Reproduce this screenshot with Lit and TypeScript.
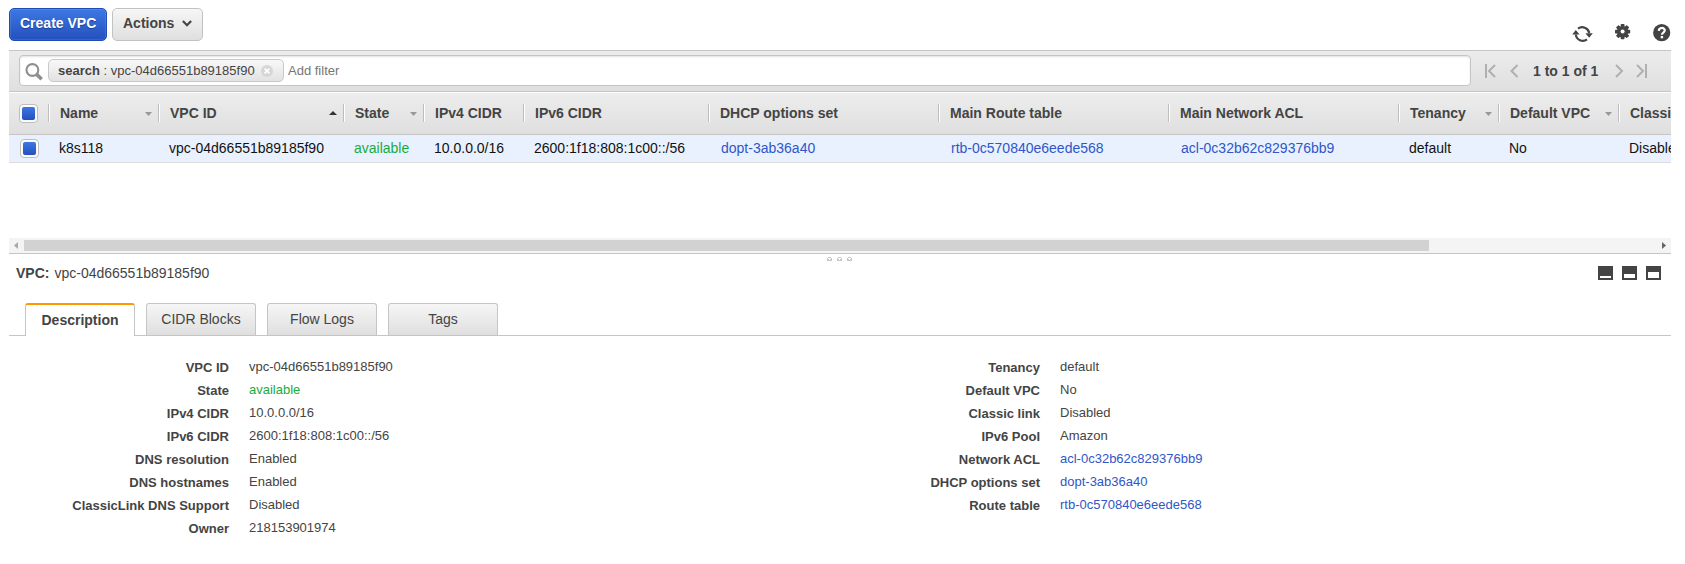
import { LitElement, html, css, svg } from "lit";
import { customElement, property } from "lit/decorators.js";
import { classMap } from "lit/directives/class-map.js";

type Col = { label: string; value: string; w: number; sort?: "asc" | "none"; kind?: "link" | "ok" };
type Field = { label: string; value: string; kind?: "link" | "ok" };

const COLUMNS: Col[] = [
  { label: "Name", value: "k8s118", w: 110, sort: "none" },
  { label: "VPC ID", value: "vpc-04d66551b89185f90", w: 185, sort: "asc" },
  { label: "State", value: "available", w: 80, sort: "none", kind: "ok" },
  { label: "IPv4 CIDR", value: "10.0.0.0/16", w: 100 },
  { label: "IPv6 CIDR", value: "2600:1f18:808:1c00::/56", w: 185 },
  { label: "DHCP options set", value: "dopt-3ab36a40", w: 230, kind: "link" },
  { label: "Main Route table", value: "rtb-0c570840e6eede568", w: 230, kind: "link" },
  { label: "Main Network ACL", value: "acl-0c32b62c829376bb9", w: 230, kind: "link" },
  { label: "Tenancy", value: "default", w: 100, sort: "none" },
  { label: "Default VPC", value: "No", w: 120, sort: "none" },
  { label: "Classic link", value: "Disabled", w: 120 },
];

const LEFT: Field[] = [
  { label: "VPC ID", value: "vpc-04d66551b89185f90" },
  { label: "State", value: "available", kind: "ok" },
  { label: "IPv4 CIDR", value: "10.0.0.0/16" },
  { label: "IPv6 CIDR", value: "2600:1f18:808:1c00::/56" },
  { label: "DNS resolution", value: "Enabled" },
  { label: "DNS hostnames", value: "Enabled" },
  { label: "ClassicLink DNS Support", value: "Disabled" },
  { label: "Owner", value: "218153901974" },
];

const RIGHT: Field[] = [
  { label: "Tenancy", value: "default" },
  { label: "Default VPC", value: "No" },
  { label: "Classic link", value: "Disabled" },
  { label: "IPv6 Pool", value: "Amazon" },
  { label: "Network ACL", value: "acl-0c32b62c829376bb9", kind: "link" },
  { label: "DHCP options set", value: "dopt-3ab36a40", kind: "link" },
  { label: "Route table", value: "rtb-0c570840e6eede568", kind: "link" },
];

const shared = css`
  * { box-sizing: border-box; }
  svg { display: block; flex: none; }
  .link { color: #3056c8; }
  .ok { color: #1aab3c; }
`;

@customElement("vpc-toolbar")
class VpcToolbar extends LitElement {
  static styles = [shared, css`
    :host { display: flex; height: 50px; padding: 8px 0 0; }
    .btn { height: 33px; border-radius: 5px; font: bold 14px/29px "Liberation Sans", Arial, sans-serif; padding: 0 0 0 10px; display: flex; }
    .primary { width: 98px; color: #fff; border: 1px solid #1d4cb8; background: linear-gradient(#3c78e4, #2450bd); text-shadow: 0 1px 1px #1b3d91; box-shadow: inset 0 0 0 1px rgba(255,255,255,.1); }
    .plain { width: 91px; margin-left: 5px; color: #444; border: 1px solid #c2c2c2; background: linear-gradient(#f6f6f6, #dfdfdf); }
    .plain svg { margin: 11px 0 0 8px; }
    .icons { margin-left: auto; display: flex; padding-top: 16px; }
    .refresh { margin-top: 1px; }
    .gear { margin-left: 22px; }
    .help { margin-left: 22px; }
  `];
  render() {
    const teeth = [0, 45, 90, 135].map((a) => svg`<rect x="5.7" y="0" width="3.8" height="15.2" rx=".7" transform="rotate(${a} 7.6 7.6)"/>`);
    return html`
      <div class="btn primary">Create VPC</div>
      <div class="btn plain">Actions
        <svg width="10" height="8" viewBox="0 0 10 8"><path d="M.9 1 5 5.2 9.1 1" fill="none" stroke="#444" stroke-width="2.2"/></svg>
      </div>
      <div class="icons">
        <svg class="refresh" width="21" height="18" viewBox="0 0 21 18"><g fill="none" stroke="#444" stroke-width="2.2"><path d="M6 3.7A7 7 0 0 1 17.2 8"/><path d="M15 14.3A7 7 0 0 1 3.8 9.5"/></g><path d="M13.4 8.2h7.4l-3.6 4.6zM.2 9.6h7.4L3.8 5z" fill="#444"/></svg>
        <svg class="gear" width="16" height="16" viewBox="0 0 16 16"><g fill="#444">${teeth}<circle cx="7.6" cy="7.6" r="5.7"/></g><circle cx="7.6" cy="7.6" r="2" fill="#fff"/></svg>
        <svg class="help" width="18" height="18" viewBox="0 0 18 18"><circle cx="8.7" cy="8.7" r="8.6" fill="#444"/><path d="M5.8 6.9C5.9 3 11.8 3.2 11.8 6.3c0 2.2-2.9 2.3-2.9 4.5" fill="none" stroke="#fff" stroke-width="2.2"/><rect x="7.7" y="12" width="2.4" height="2.3" fill="#fff"/></svg>
      </div>`;
  }
}

@customElement("vpc-filter")
class VpcFilter extends LitElement {
  static styles = [shared, css`
    :host { display: flex; height: 42px; border-top: 1px solid #c5c5c5; border-bottom: 1px solid #c5c5c5; background: linear-gradient(#ececec, #dfdfdf); padding: 4px 0 0 10px; }
    .box { flex: none; width: 1452px; height: 31px; border: 1px solid #c5c5c5; border-radius: 4px; background: #fff; box-shadow: inset 0 1px 2px rgba(0,0,0,.12); display: flex; padding: 3px 0 0 6px; font-size: 13px; }
    .mag { margin: 4px 0 0 -1px; }
    .chip { width: 236px; height: 23px; margin-left: 5px; border: 1px solid #c9c9c9; border-radius: 5px; background: linear-gradient(#f8f8f8, #e2e2e2); color: #444; line-height: 21px; padding-left: 9px; display: flex; white-space: pre; }
    .chip svg { margin: 5px 0 0 6px; }
    .hint { color: #767676; line-height: 23px; margin-left: 4px; }
    .pager { display: flex; margin-left: 14px; padding-top: 9px; }
    .count { font: bold 14px/14px "Liberation Sans", Arial, sans-serif; color: #444; margin: 0 17px 0 14px; white-space: nowrap; }
    .prev { margin-left: 14px; }
    .last { margin-left: 12px; }
  `];
  render() {
    const arrow = (d: string, w: number, cls = "") => html`<svg class=${cls} width=${w} height="14" viewBox="0 0 ${w} 14"><path d=${d} fill="none" stroke="#b0b0b0" stroke-width="2"/></svg>`;
    return html`
      <div class="box">
        <svg class="mag" width="18" height="18" viewBox="0 0 18 18"><circle cx="7.4" cy="7" r="5.9" fill="none" stroke="#8f8f8f" stroke-width="2.1"/><path d="M11.7 11.4l5 4.8" stroke="#8f8f8f" stroke-width="3.6"/></svg>
        <div class="chip"><b>search</b> : vpc-04d66551b89185f90<svg width="12" height="12" viewBox="0 0 12 12"><circle cx="6" cy="6" r="6" fill="#d6d6d6"/><path d="M3.6 3.6l4.8 4.8M8.4 3.6l-4.8 4.8" stroke="#fff" stroke-width="1.7"/></svg></div>
        <div class="hint">Add filter</div>
      </div>
      <div class="pager">
        ${arrow("M1 0V14M10 1 4 7l6 6", 11)}${arrow("M7.5 1 1.5 7l6 6", 9, "prev")}
        <div class="count">1 to 1 of 1</div>
        ${arrow("M1 1l6 6-6 6", 9)}${arrow("M1 1l6 6-6 6M10 0V14", 11, "last")}
      </div>`;
  }
}

@customElement("vpc-table")
class VpcTable extends LitElement {
  static styles = [shared, css`
    :host { display: block; height: 161px; overflow: hidden; font-size: 14px; }
    .head, .row { display: flex; overflow: hidden; }
    .head { height: 43px; border-top: 1px solid #fff; border-bottom: 1px solid #c5c5c5; background: linear-gradient(#ededed, #dfdfdf); color: #444; font-weight: bold; padding-top: 11px; }
    .row { height: 28px; border-bottom: 1px solid #dcdcdc; background: #e9f1ff; color: #111; }
    .pick { flex: none; width: 39px; padding-left: 10px; }
    .row .pick { padding: 4px 0 0 11px; }
    .check { width: 19px; height: 19px; border: 1px solid #bdbdbd; border-radius: 4px; background: #f8f8f8; padding: 2px; display: block; box-shadow: inset 0 0 0 1px #fff; }
    .check i { display: block; height: 13px; width: 13px; border-radius: 2px; background: linear-gradient(#3c78e4, #2450bd); }
    .col { flex: none; display: flex; justify-content: space-between; height: 18px; line-height: 18px; border-left: 1px solid #bdbdbd; box-shadow: inset 1px 0 0 #fff; padding: 0 6px 0 11px; white-space: nowrap; }
    .col svg { margin-top: 8px; }
    .col svg.asc { margin-top: 7px; }
    .cell { flex: none; padding-left: 11px; line-height: 27px; white-space: nowrap; }
    .cell.link { padding-left: 13px; }
  `];
  render() {
    const check = html`<div class="pick"><span class="check"><i></i></span></div>`;
    return html`
      <div class="head">${check}${COLUMNS.map((c) => html`
        <div class="col" style="width:${c.w}px"><span>${c.label}</span>${c.sort === "asc"
          ? html`<svg class="asc" width="8" height="4" viewBox="0 0 8 4"><path d="M0 4 4 0l4 4z" fill="#333"/></svg>`
          : c.sort ? html`<svg width="7" height="4" viewBox="0 0 7 4"><path d="M0 0h7L3.5 4z" fill="#999"/></svg>` : ""}</div>`)}
      </div>
      <div class="row">${check}${COLUMNS.map((c) => html`
        <div class=${classMap({ cell: true, link: c.kind === "link", ok: c.kind === "ok" })} style="width:${c.w}px">${c.value}</div>`)}
      </div>`;
  }
}

@customElement("vpc-fields")
class VpcFields extends LitElement {
  @property({ attribute: false }) fields: Field[] = [];
  static styles = [shared, css`
    :host { display: block; font-size: 13px; color: #444; }
    .field { display: grid; grid-template-columns: 220px 1fr; column-gap: 20px; height: 23px; line-height: 15px; }
    .name { text-align: right; font-weight: bold; padding-top: 1px; }
  `];
  render() {
    return this.fields.map((f) => html`<div class="field"><div class="name">${f.label}</div><div class=${f.kind ?? ""}>${f.value}</div></div>`);
  }
}

@customElement("app-root")
class AppRoot extends LitElement {
  static styles = [shared, css`
    :host { display: block; box-sizing: border-box; width: 1685px; height: 564px; overflow: hidden; background: #fff; padding: 0 14px 0 9px; font-family: "Liberation Sans", Arial, sans-serif; color: #444; }
    .scroll { height: 16px; margin-top: -15px; background: #f4f4f4; border-bottom: 1px solid #c5c5c5; display: flex; padding: 2px 5px 0; position: relative; }
    .thumb { width: 1405px; height: 11px; background: #d2d2d2; margin-left: 6px; }
    .scroll svg { margin-top: 2px; }
    .scroll .fwd { margin-left: auto; }
    .grips { display: flex; justify-content: center; gap: 5px; height: 7px; padding-top: 3px; margin-right: 1px; }
    .title { display: flex; align-items: center; height: 24px; padding: 0 10px 0 7px; font-size: 14px; }
    .title b { margin-right: 5px; }
    .panes { display: flex; gap: 9px; margin-left: auto; }
    .tabs { display: flex; gap: 11px; height: 33px; margin-top: 18px; padding-left: 16px; border-bottom: 1px solid #c5c5c5; }
    .tab { width: 110px; height: 32px; border: 1px solid #c5c5c5; border-bottom: 0; border-radius: 3px 3px 0 0; background: linear-gradient(#f6f6f6, #dfdfdf); text-align: center; font-size: 14px; line-height: 31px; }
    .tab.on { height: 33px; border-top: 2px solid #f90; background: #fff; font-weight: bold; }
    .details { display: grid; grid-template-columns: 811px 1fr; padding-top: 23px; }
  `];
  render() {
    const pane = (y: number) => html`<svg width="15" height="14" viewBox="0 0 15 14"><path d="M0 0h15v14H0z" fill="#444"/><path d="M2 ${y}h11V12H2z" fill="#fff"/></svg>`;
    const grip = html`<svg width="5" height="4" viewBox="0 0 5 4"><path d="M0 1h1V0h3v1h1v3H0z" fill="#c8c8c8"/><path d="M1 1h3v1H3v1H2V2H1z" fill="#fff"/></svg>`;
    return html`
      <vpc-toolbar></vpc-toolbar>
      <vpc-filter></vpc-filter>
      <vpc-table></vpc-table>
      <div class="scroll">
        <svg width="4" height="7" viewBox="0 0 4 7"><path d="M4 0v7L0 3.5z" fill="#aaa"/></svg>
        <div class="thumb"></div>
        <svg class="fwd" width="4" height="7" viewBox="0 0 4 7"><path d="M0 0v7l4-3.5z" fill="#666"/></svg>
      </div>
      <div class="grips">${grip}${grip}${grip}</div>
      <div class="title"><b>VPC:</b><span>vpc-04d66551b89185f90</span><div class="panes">${pane(10)}${pane(8)}${pane(6)}</div></div>
      <div class="tabs">
        <div class="tab on">Description</div><div class="tab">CIDR Blocks</div><div class="tab">Flow Logs</div><div class="tab">Tags</div>
      </div>
      <div class="details"><vpc-fields .fields=${LEFT}></vpc-fields><vpc-fields .fields=${RIGHT}></vpc-fields></div>`;
  }
}
